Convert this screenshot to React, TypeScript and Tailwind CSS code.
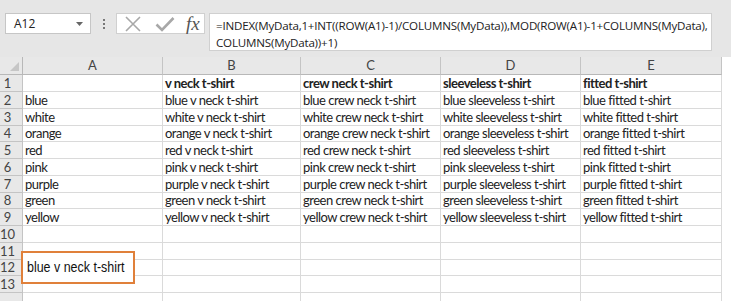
import React from "react";

const colors = ["blue", "white", "orange", "red", "pink", "purple", "green", "yellow"];
const styles = ["v neck t-shirt", "crew neck t-shirt", "sleeveless t-shirt", "fitted t-shirt"];
const colW = ["w-[140px]", "w-[138px]", "w-[140px]", "w-[140px]", "w-[141px]"];
const rowH = ["h-[17px]", "h-[17px]", "h-[17px]", "h-[16px]", "h-[17px]", "h-[17px]", "h-[17px]", "h-[16px]", "h-[17px]", "h-[17px]", "h-[17px]", "h-[16px]", "h-[17px]", "h-[17px]"];

function Cell({ w, h, children, bold }: { w: string; h: string; children?: React.ReactNode; bold?: boolean }) {
  return (
    <div
      className={`${w} ${h} shrink-0 border-r border-b border-[#dadada] pl-[2px] flex items-center overflow-hidden whitespace-nowrap text-[13px] tracking-[-0.5px] leading-none text-[#222] ${bold ? "font-bold" : ""}`}
    >
      {children}
    </div>
  );
}

export default function App() {
  const rows: string[][] = [];
  rows.push(["", ...styles]);
  colors.forEach((c) => rows.push([c, ...styles.map((s) => `${c} ${s}`)]));
  for (let i = 0; i < 5; i++) rows.push(["", "", "", "", ""]);

  return (
    <div className="w-[731px] h-[301px] overflow-hidden bg-white relative" style={{ fontFamily: "Lato, 'Liberation Sans', sans-serif" }}>
      {/* Formula bar */}
      <div className="h-[57px] bg-[#e6e6e6] flex items-start pt-[13px] pl-[5px]">
        <div className="w-[86px] h-[21px] bg-white border border-[#c6c6c6] flex items-center justify-between pl-[8px] pr-[7px]">
          <span className="text-[12px] text-[#222]" style={{ fontFamily: "'Open Sans', sans-serif" }}>A12</span>
          <svg width="7" height="4" viewBox="0 0 7 4"><path d="M0 0 L7 0 L3.5 4 Z" fill="#666" /></svg>
        </div>
        <div className="w-[25px] h-[21px] flex flex-col items-center justify-center gap-[2px]">
          <div className="w-[2px] h-[2px] bg-[#777]" />
          <div className="w-[2px] h-[2px] bg-[#777]" />
          <div className="w-[2px] h-[2px] bg-[#777]" />
        </div>
        <div className="w-[89px] h-[21px] bg-white border border-[#d0d0d0] flex items-center pl-[7px]">
          <svg width="18" height="16" viewBox="0 0 18 16">
            <path d="M2 1 L16 15 M16 1 L2 15" stroke="#a8a8a8" strokeWidth="1.6" fill="none" />
          </svg>
          <svg width="20" height="16" viewBox="0 0 20 16" className="ml-[13px]">
            <path d="M1.5 8.5 L7 14 L18.5 2" stroke="#a8a8a8" strokeWidth="2.6" fill="none" />
          </svg>
          <span className="ml-[11px] text-[19px] italic text-[#555] leading-none" style={{ fontFamily: "'Liberation Serif', serif" }}>
            fx
          </span>
        </div>
        <div
          className="ml-[4px] w-[503px] h-[38px] bg-white border border-[#d0d0d0] pl-[6px] pt-[3px] text-[11.6px] tracking-[-0.2px] leading-[17px] text-[#222]"
          style={{ fontFamily: "'Open Sans', sans-serif" }}
        >
          <div className="whitespace-nowrap">=INDEX(MyData,1+INT((ROW(A1)-1)/COLUMNS(MyData)),MOD(ROW(A1)-1+COLUMNS(MyData),</div>
          <div className="whitespace-nowrap">COLUMNS(MyData))+1)</div>
        </div>
      </div>

      {/* Column headers */}
      <div className="flex h-[18px] bg-[#e8e8e8]">
        <div className="w-[23px] h-[18px] shrink-0 border-r border-b border-[#b8b8b8] flex items-end justify-end pr-[3px] pb-[3px]">
          <svg width="9" height="9" viewBox="0 0 9 9"><path d="M9 0 L9 9 L0 9 Z" fill="#c6c6c6" /></svg>
        </div>
        {["A", "B", "C", "D", "E"].map((l, i) => (
          <div key={l} className={`${colW[i]} h-[18px] shrink-0 border-r border-b border-[#c4c4c4] border-b-[#b8b8b8] flex items-center justify-center text-[13px] text-[#444]`}>
            {l}
          </div>
        ))}
        <div className="flex-1 h-[18px] bg-white" />
      </div>

      {/* Rows */}
      {rows.map((r, ri) => (
        <div key={ri} className="flex">
          <div className={`w-[23px] ${rowH[ri]} shrink-0 bg-[#e8e8e8] border-r border-b border-[#c4c4c4] flex items-center`}>
            <span className="w-[15px] text-center text-[13px] leading-none text-[#444]">{ri < 13 ? ri + 1 : ""}</span>
          </div>
          {r.map((v, ci) => (
            <Cell key={ci} w={colW[ci]} h={rowH[ri]} bold={ri === 0}>
              {v}
            </Cell>
          ))}
          <div className="flex-1" />
        </div>
      ))}

      {/* Text box over A11:A13 */}
      <div className="absolute left-[21px] top-[251px] w-[114px] h-[33px] border-2 border-[#e0803a] bg-white flex items-center pl-[4px]">
        <span className="inline-block text-[15px] text-[#111] whitespace-nowrap origin-left scale-x-[0.83]" style={{ fontFamily: "'Liberation Sans', Arial, sans-serif" }}>
          blue v neck t-shirt
        </span>
      </div>
    </div>
  );
}
